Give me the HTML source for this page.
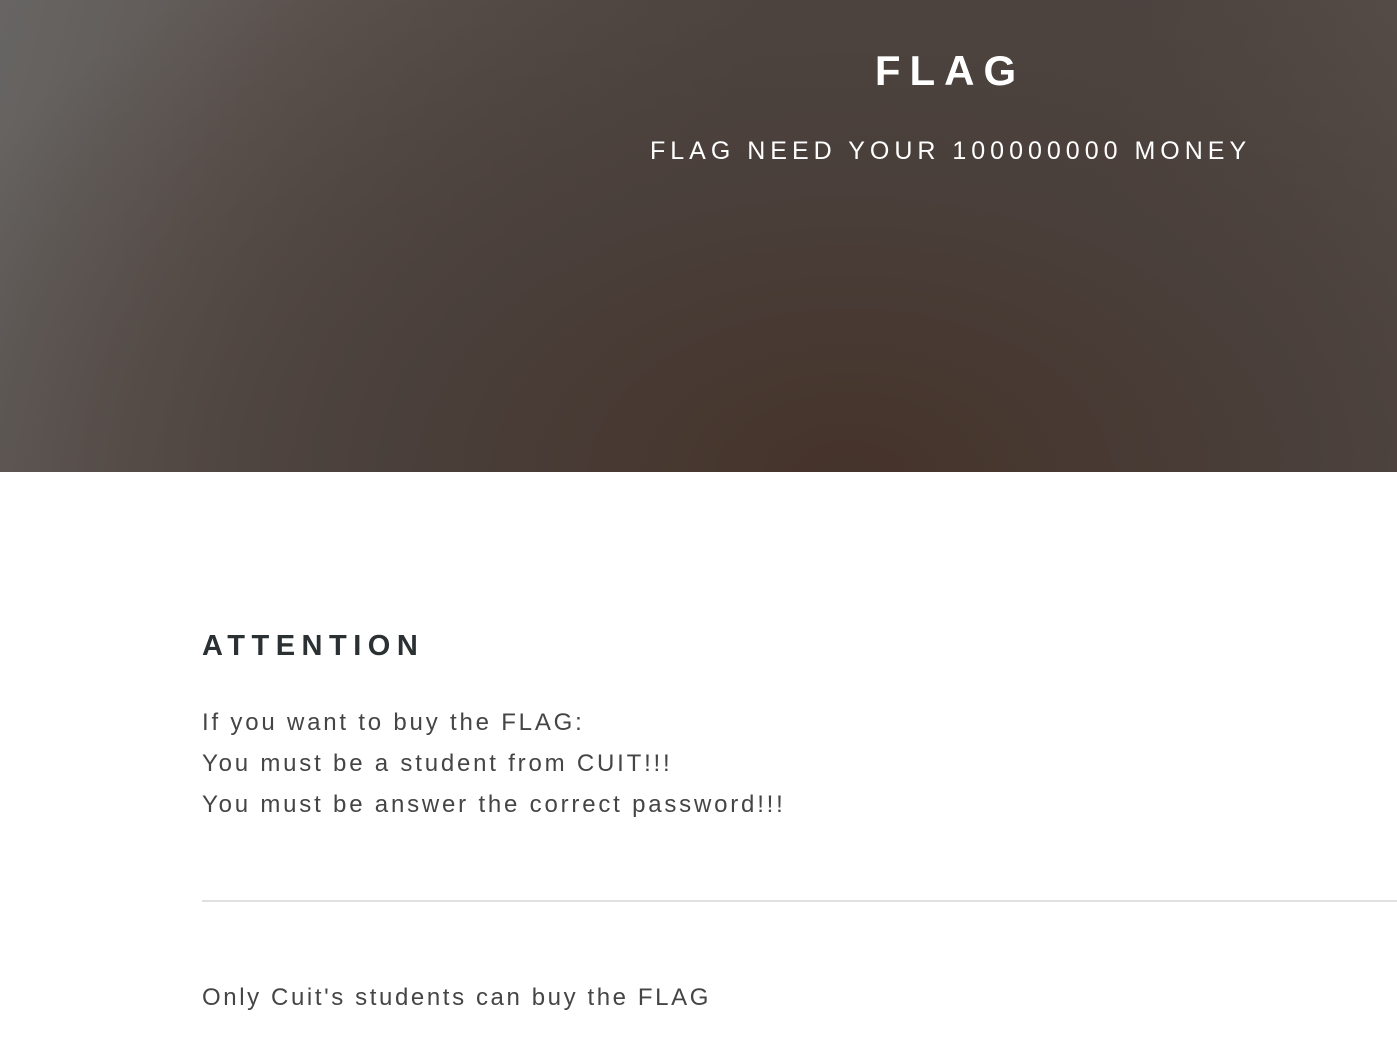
<!DOCTYPE html>
<html><head><meta charset="utf-8"><style>
html,body{margin:0;padding:0;width:1397px;height:1039px;overflow:hidden;background:#fff;font-family:"Liberation Sans",sans-serif;}
.hdr{position:absolute;left:0;top:0;width:1397px;height:472px;
background:radial-gradient(ellipse 1000px 650px at 850px 480px,#45332a 0%,#4a3f3a 45%,rgba(80,72,68,0) 100%),linear-gradient(105deg,#676563 0%,#5d5450 22%,#4f4743 50%,#4e4643 75%,#5a514d 100%);}
.t1{position:absolute;left:700px;width:500px;text-align:center;top:46px;color:#fff;font-weight:bold;font-size:42px;letter-spacing:9px;line-height:50px;}
.t2{position:absolute;left:650px;top:136px;color:#fff;font-size:25px;letter-spacing:5px;line-height:30px;white-space:nowrap;}
.h{position:absolute;left:202px;top:630px;font-weight:bold;font-size:29px;letter-spacing:6.5px;color:#2b3033;}
.p{position:absolute;left:202px;top:702px;font-size:24px;line-height:41px;letter-spacing:2.8px;color:#464446;}
.hr{position:absolute;left:202px;top:900px;width:1195px;height:2px;background:#e0e0e0;}
.p2{position:absolute;left:202px;top:979px;font-size:24px;line-height:38px;letter-spacing:2.6px;color:#464446;}
</style></head><body>
<div class="hdr"><div class="t1">FLAG</div><div class="t2">FLAG NEED YOUR 100000000 MONEY</div></div>
<div class="h">ATTENTION</div>
<div class="p">If you want to buy the FLAG:<br>You must be a student from CUIT!!!<br>You must be answer the correct password!!!</div>
<div class="hr"></div>
<div class="p2">Only Cuit's students can buy the FLAG</div>
</body></html>
